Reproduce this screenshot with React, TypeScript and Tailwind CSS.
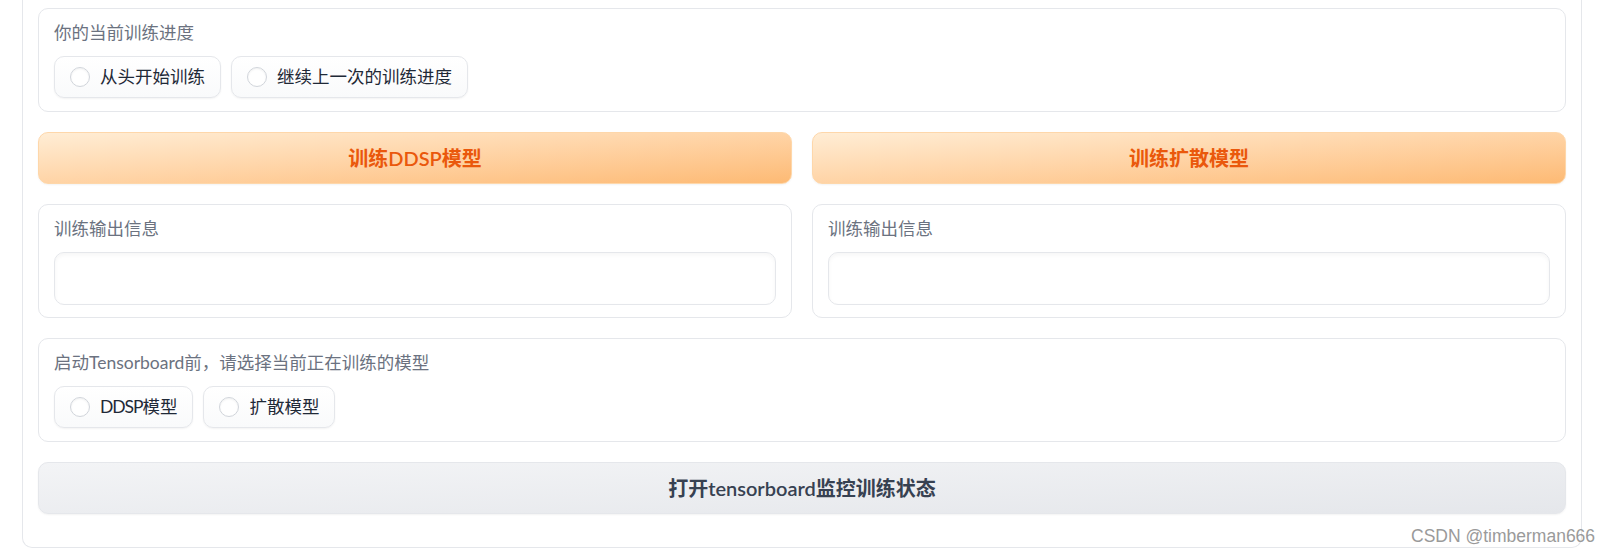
import React from 'react';

const Radio: React.FC<{ children: React.ReactNode }> = ({ children }) => (
  <label className="flex items-center gap-[10px] h-[42px] pl-[15px] pr-[15px] rounded-[10px] border border-[#e5e7eb] bg-gradient-to-t from-[#f9fafb] to-white shadow-[0_1px_2px_rgba(0,0,0,0.05)] text-[17.5px] text-[#1f2937] leading-none">
    <span className="w-[20px] h-[20px] rounded-full border border-[#d1d5db] bg-white shadow-[inset_0_1px_2px_rgba(0,0,0,0.06)]" />
    <span>{children}</span>
  </label>
);

const Block: React.FC<{ label: string; children: React.ReactNode; bottom?: string }> = ({ label, children, bottom = 'pb-[13px]' }) => (
  <div className={`rounded-[10px] border border-[#e5e7eb] bg-white px-[15px] pt-[13px] ${bottom} flex flex-col gap-[12px]`}>
    <span className="h-[22px] leading-[22px] text-[17.5px] text-[#6b7280]">{label}</span>
    {children}
  </div>
);

const PrimaryButton: React.FC<{ text: string }> = ({ text }) => (
  <button className="h-[52px] rounded-[10px] border border-[#fed7aa] bg-gradient-to-br from-[#ffedd5] to-[#fdba74] text-[20px] font-semibold text-[#ea580c] shadow-[0_1px_2px_rgba(0,0,0,0.05)]">
    {text}
  </button>
);

const OutputBox: React.FC = () => (
  <Block label="训练输出信息" bottom="pb-[12px]">
    <div className="h-[53px] rounded-[10px] border border-[#e5e7eb] bg-white shadow-[inset_0_2px_4px_rgba(0,0,0,0.04)]" />
  </Block>
);

export default function App() {
  return (
    <div className="relative w-[1608px] h-[552px] overflow-hidden bg-white font-['Lato','Noto_Sans_CJK_SC',sans-serif]">
      <div className="ml-[22px] w-[1560px] border-x border-b border-[#e5e7eb] rounded-b-[10px] px-[15px] pt-[8px] pb-[33px] flex flex-col gap-[20px]">
        <Block label="你的当前训练进度">
          <div className="flex gap-[10px]">
            <Radio>从头开始训练</Radio>
            <Radio>继续上一次的训练进度</Radio>
          </div>
        </Block>

        <div className="grid grid-cols-2 gap-[20px]">
          <PrimaryButton text="训练DDSP模型" />
          <PrimaryButton text="训练扩散模型" />
        </div>

        <div className="grid grid-cols-2 gap-[20px]">
          <OutputBox />
          <OutputBox />
        </div>

        <Block label="启动Tensorboard前，请选择当前正在训练的模型">
          <div className="flex gap-[10px]">
            <Radio>
              <span className="tracking-[-0.06em]">DDSP</span>模型
            </Radio>
            <Radio>扩散模型</Radio>
          </div>
        </Block>

        <button className="h-[52px] rounded-[10px] border border-[#e5e7eb] bg-gradient-to-br from-[#f3f4f6] to-[#e5e7eb] text-[20px] font-semibold text-[#374151] shadow-[0_1px_2px_rgba(0,0,0,0.05)]">
          打开tensorboard监控训练状态
        </button>
      </div>

      <span className="absolute left-[1411px] top-[525px] text-[17.5px] leading-[22px] text-[#9a9a9a] font-['Liberation_Sans',sans-serif]">
        CSDN @timberman666
      </span>
    </div>
  );
}
